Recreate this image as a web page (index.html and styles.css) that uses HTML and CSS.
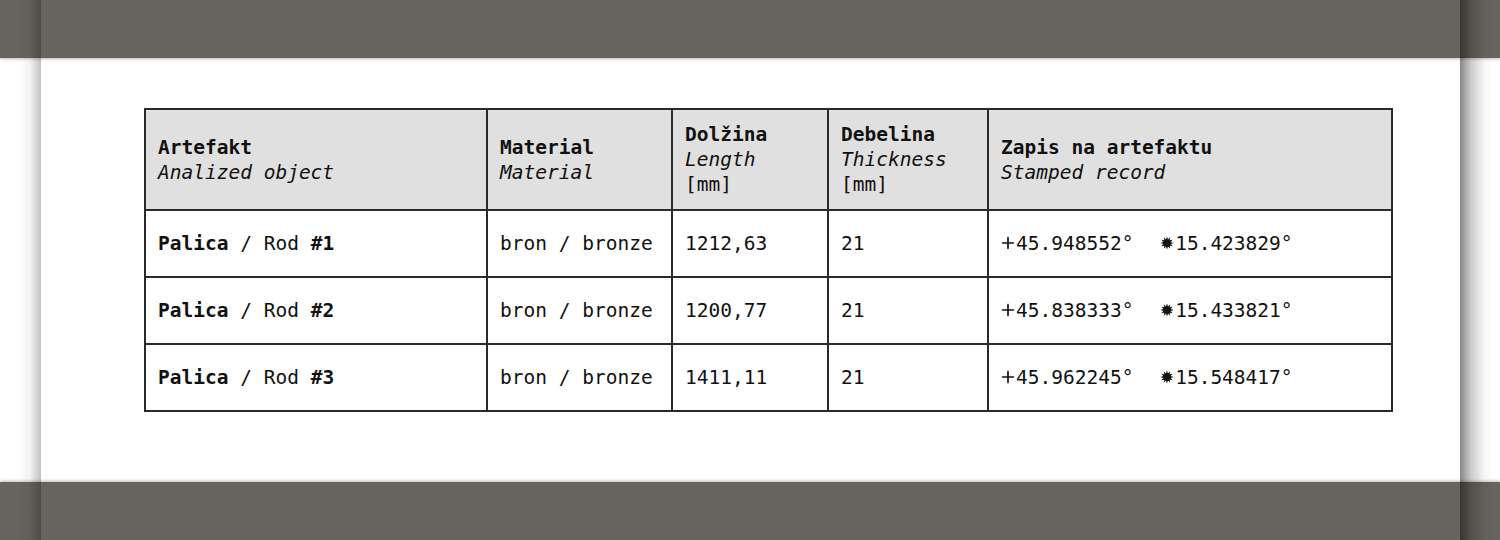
FILE: index.html
```html
<!DOCTYPE html>
<html lang="sl">
<head>
<meta charset="utf-8">
<title>Artefakti</title>
<link rel="stylesheet" href="styles.css">
</head>
<body>
<div class="page">
  <div class="band band-top"></div>
  <main class="sheet">
    <table class="data">
      <colgroup>
        <col class="c1"><col class="c2"><col class="c3"><col class="c4"><col class="c5">
      </colgroup>
      <thead>
        <tr>
          <th><b>Artefakt</b><i>Analized object</i></th>
          <th><b>Material</b><i>Material</i></th>
          <th><b>Dolžina</b><i>Length</i><span>[mm]</span></th>
          <th><b>Debelina</b><i>Thickness</i><span>[mm]</span></th>
          <th><b>Zapis na artefaktu</b><i>Stamped record</i></th>
        </tr>
      </thead>
      <tbody>
        <tr>
          <td><b>Palica</b> / Rod <b>#1</b></td>
          <td>bron / bronze</td>
          <td>1212,63</td>
          <td>21</td>
          <td>
            <span class="coord"><svg class="ico" viewBox="0 0 14 14"><polygon points="0.4,7 1.6,6.15 6.15,6.15 6.15,1.6 7,0.4 7.85,1.6 7.85,6.15 12.4,6.15 13.6,7 12.4,7.85 7.85,7.85 7.85,12.4 7,13.6 6.15,12.4 6.15,7.85 1.6,7.85"/></svg>45.948552°</span>
            <span class="coord"><svg class="ico" viewBox="0 0 14 14"><polygon points="13.6,7 10.6,6 12.72,3.7 9.65,4.35 10.3,1.28 8,3.4 7,0.4 6,3.4 3.7,1.28 4.35,4.35 1.28,3.7 3.4,6 0.4,7 3.4,8 1.28,10.3 4.35,9.65 3.7,12.72 6,10.6 7,13.6 8,10.6 10.3,12.72 9.65,9.65 12.72,10.3 10.6,8"/></svg>15.423829°</span>
          </td>
        </tr>
        <tr>
          <td><b>Palica</b> / Rod <b>#2</b></td>
          <td>bron / bronze</td>
          <td>1200,77</td>
          <td>21</td>
          <td>
            <span class="coord"><svg class="ico" viewBox="0 0 14 14"><polygon points="0.4,7 1.6,6.15 6.15,6.15 6.15,1.6 7,0.4 7.85,1.6 7.85,6.15 12.4,6.15 13.6,7 12.4,7.85 7.85,7.85 7.85,12.4 7,13.6 6.15,12.4 6.15,7.85 1.6,7.85"/></svg>45.838333°</span>
            <span class="coord"><svg class="ico" viewBox="0 0 14 14"><polygon points="13.6,7 10.6,6 12.72,3.7 9.65,4.35 10.3,1.28 8,3.4 7,0.4 6,3.4 3.7,1.28 4.35,4.35 1.28,3.7 3.4,6 0.4,7 3.4,8 1.28,10.3 4.35,9.65 3.7,12.72 6,10.6 7,13.6 8,10.6 10.3,12.72 9.65,9.65 12.72,10.3 10.6,8"/></svg>15.433821°</span>
          </td>
        </tr>
        <tr>
          <td><b>Palica</b> / Rod <b>#3</b></td>
          <td>bron / bronze</td>
          <td>1411,11</td>
          <td>21</td>
          <td>
            <span class="coord"><svg class="ico" viewBox="0 0 14 14"><polygon points="0.4,7 1.6,6.15 6.15,6.15 6.15,1.6 7,0.4 7.85,1.6 7.85,6.15 12.4,6.15 13.6,7 12.4,7.85 7.85,7.85 7.85,12.4 7,13.6 6.15,12.4 6.15,7.85 1.6,7.85"/></svg>45.962245°</span>
            <span class="coord"><svg class="ico" viewBox="0 0 14 14"><polygon points="13.6,7 10.6,6 12.72,3.7 9.65,4.35 10.3,1.28 8,3.4 7,0.4 6,3.4 3.7,1.28 4.35,4.35 1.28,3.7 3.4,6 0.4,7 3.4,8 1.28,10.3 4.35,9.65 3.7,12.72 6,10.6 7,13.6 8,10.6 10.3,12.72 9.65,9.65 12.72,10.3 10.6,8"/></svg>15.548417°</span>
          </td>
        </tr>
      </tbody>
    </table>
  </main>
  <div class="band band-bottom"></div>
  <div class="edge edge-left"></div>
  <div class="edge edge-right"></div>
</div>
</body>
</html>
```

FILE: styles.css
```css
html, body {
  margin: 0;
  padding: 0;
}
body {
  background: #67645d;
  font-family: "DejaVu Sans Mono", "Liberation Mono", monospace;
  color: #111;
}
.page {
  position: relative;
  width: 1500px;
  height: 540px;
  display: flex;
  flex-direction: column;
  overflow: hidden;
}
.band {
  height: 58px;
  flex: none;
  background: #67645d;
  position: relative;
  z-index: 1;
}
.band-top {
  box-shadow: 0 1px 3px rgba(60, 58, 54, 0.35);
}
.band-bottom {
  box-shadow: 0 -1px 3px rgba(60, 58, 54, 0.35);
}
.sheet {
  flex: 1;
  background: #ffffff;
  padding: 50px 0 0 144px;
  box-sizing: border-box;
}
.edge {
  position: absolute;
  top: 0;
  bottom: 0;
  z-index: 2;
  pointer-events: none;
}
.edge-left {
  left: 19px;
  width: 22px;
  background: linear-gradient(to right, rgba(0,0,0,0), rgba(0,0,0,0.05) 50%, rgba(0,0,0,0.24));
}
.edge-right {
  left: 1460px;
  width: 32px;
  background: linear-gradient(to right, rgba(0,0,0,0.47), rgba(0,0,0,0.2) 35%, rgba(0,0,0,0.04) 75%, rgba(0,0,0,0));
}
.data {
  border-collapse: collapse;
  width: 1247px;
  table-layout: fixed;
  font-size: 19.5px;
  line-height: 25px;
}
.c1 { width: 342px; }
.c2 { width: 185px; }
.c3 { width: 156px; }
.c4 { width: 160px; }
.c5 { width: 404px; }
.data th, .data td {
  border: 2px solid #2a2a2a;
  padding: 0 12px;
  text-align: left;
  vertical-align: middle;
  white-space: nowrap;
}
.data th {
  background: #e0e0e0;
  height: 99px;
  font-weight: normal;
}
.data th b, .data th i, .data th span {
  display: block;
}
.data th b {
  font-weight: bold;
}
.data th i {
  font-style: italic;
}
.data td {
  height: 65px;
}
.data td b {
  font-weight: bold;
}
.coord {
  display: inline-flex;
  align-items: center;
  gap: 1px;
}
.coord + .coord {
  margin-left: 15px;
}
.ico {
  width: 14px;
  height: 14px;
  fill: #111;
  margin-top: -2px;
}
```
